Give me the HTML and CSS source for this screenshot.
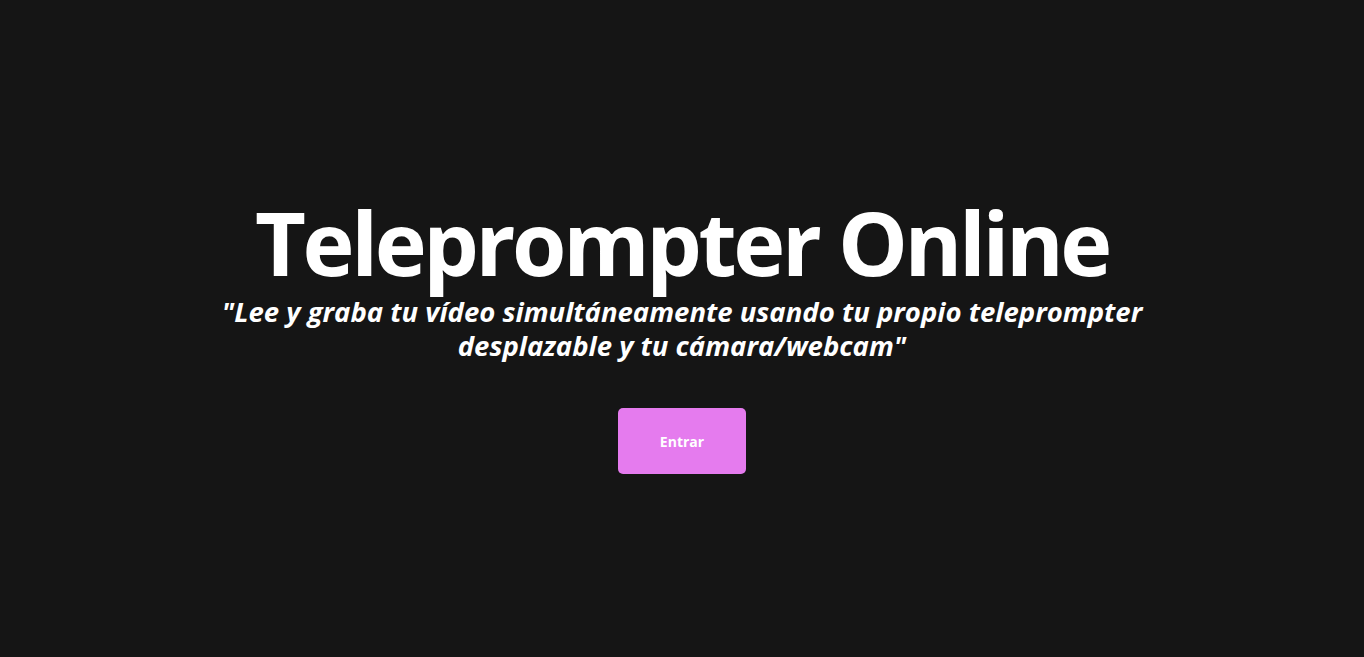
FILE: index.html
```html
<!DOCTYPE html>
<html lang="es">
<head>
<meta charset="utf-8">
<title>Teleprompter Online</title>
<link rel="stylesheet" href="styles.css">
</head>
<body>
<main class="hero">
  <h1 class="title">Teleprompter Online</h1>
  <p class="subtitle">"Lee y graba tu vídeo simultáneamente usando tu propio teleprompter<br>desplazable y tu cámara/webcam"</p>
  <button class="enter">Entrar</button>
</main>
</body>
</html>
```
FILE: styles.css
```css
html, body {
  margin: 0;
  padding: 0;
  height: 100%;
}
body {
  background: #151515;
  color: #ffffff;
  font-family: "Open Sans", "Noto Sans", sans-serif;
}
.hero {
  box-sizing: border-box;
  height: 100%;
  padding-top: 6px;
  display: flex;
  flex-direction: column;
  align-items: center;
  justify-content: center;
  text-align: center;
}
.title {
  margin: 0;
  font-size: 88px;
  font-weight: 700;
  line-height: 106px;
  letter-spacing: -3.4px;
}
.subtitle {
  margin: 0;
  font-size: 27.5px;
  font-weight: 700;
  font-style: italic;
  line-height: 34px;
}
.enter {
  margin-top: 45px;
  width: 128px;
  height: 66px;
  border: none;
  border-radius: 5px;
  background: #e57bee;
  color: #ffffff;
  font-family: inherit;
  font-size: 14px;
  font-weight: 700;
}
```
